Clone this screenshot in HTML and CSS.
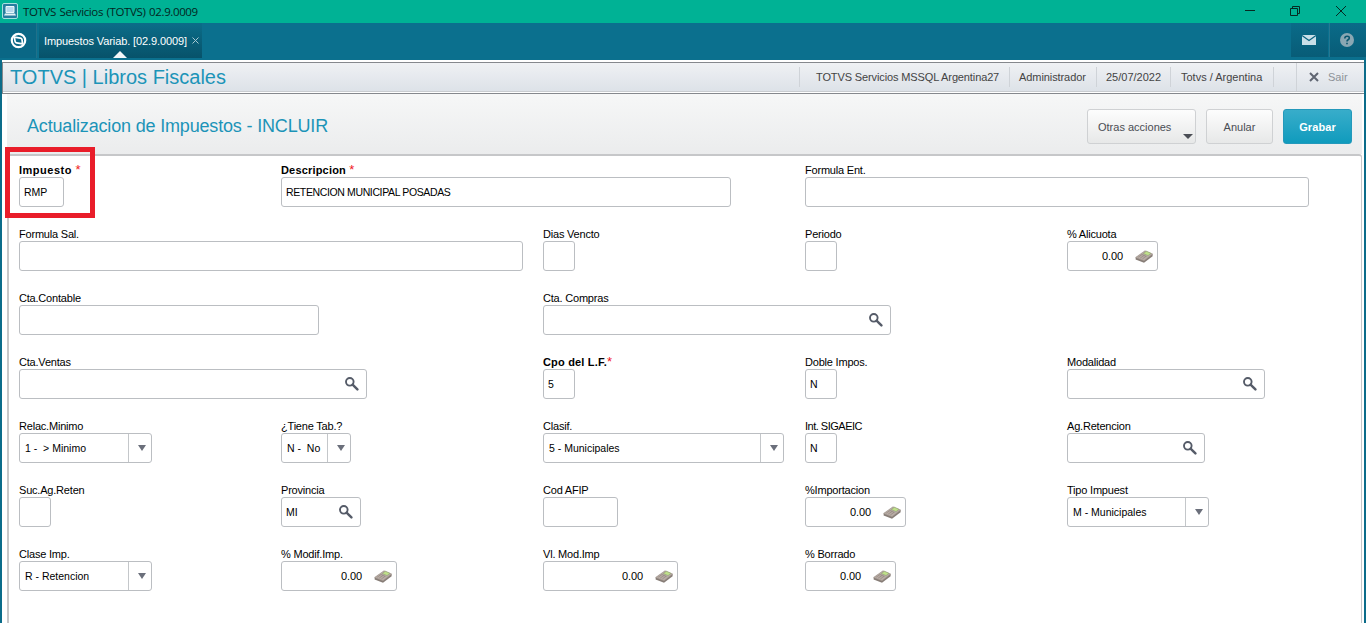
FILE: index.html
```html
<!DOCTYPE html>
<html lang="es">
<head>
<meta charset="utf-8">
<title>TOTVS Servicios</title>
<link rel="stylesheet" href="styles.css">
</head>
<body>
<svg class="defs" width="0" height="0">
  <symbol id="search" viewBox="0 0 14 14"><circle cx="4.800" cy="4.800" r="3.800" fill="none" stroke="#555b68" stroke-width="1.900"/><path d="M7.600 7.600l4.800 4.800" stroke="#555b68" stroke-width="2.400" stroke-linecap="round"/></symbol>
  <symbol id="calc" viewBox="0 0 18 15"><path d="M.6 8.600L10 2l7.600 3v2.200L9 13.800.6 10.600z" fill="#877d77"/><path d="M.6 8.400L10 1.700l7.600 3.300L9 11.700z" fill="#b8aca5" stroke="#a0968f" stroke-width=".5"/><path d="M8.400 4.500l3-2.200 4.600 2-3 2.300z" fill="#bfe08a" stroke="#8c9a70" stroke-width=".5"/><path d="M3.200 8.200l3.800-2.700 4.500 2M5.200 9.100l3.900-2.700M7.300 10l3.700-2.700" fill="none" stroke="#92857e" stroke-width=".7"/></symbol>
  <symbol id="down" viewBox="0 0 8 6"><path d="M0 0h8L4 6z" fill="#6b6f7b"/></symbol>
</svg>
<div class="window">
  <header class="titlebar">
    <svg class="app-icon" width="16" height="16" viewBox="0 0 16 16"><rect x=".5" y=".5" width="15" height="15" rx="1.5" fill="#267d9f" stroke="#a7dfe0"/><path d="M4 3.500h8v6H4z" fill="#b9d9ed" stroke="#e9f8fb"/><path d="M3 10.500h10l1 2H2z" fill="#e3f1f6"/></svg>
    <span class="window-title">TOTVS Servicios (TOTVS) 02.9.0009</span>
    <svg class="controls" width="104" height="12" viewBox="0 0 104 12"><g fill="none" stroke="#062a22" stroke-width="1"><path d="M0 5.500h10"/><path d="M45.500 3.500h7v7h-7zM47.500 3.500v-2h7v7h-2"/><path d="M91 1l10 10M101 1L91 11"/></g></svg>
  </header>
  <nav class="tabs">
    <div class="home"><svg width="17" height="17" viewBox="0 0 17 17"><circle cx="8.500" cy="8.500" r="6.700" fill="none" stroke="#fff" stroke-width="2.200"/><path d="M4.300 5.200l6.200.9q1.300.2 1.500 1.500l.6 4.200-6-.9q-1.300-.2-1.500-1.500z" fill="none" stroke="#fff" stroke-width="1.700" stroke-linejoin="round"/></svg></div>
    <div class="tab"><span class="tab-text">Impuestos Variab. [02.9.0009]</span><svg class="tab-close" width="7" height="7" viewBox="0 0 7 7"><path d="M.5.500l6 6M6.500.500l-6 6" stroke="#a8c9d3"/></svg><i class="pointer"></i></div>
    <div class="tool mail"><svg width="14" height="10" viewBox="0 0 14 10"><path d="M0 0h14v10H0z" fill="#c9dfe8"/><path d="M0 .5l7 5 7-5" fill="none" stroke="#0b6480" stroke-width="1.200"/></svg></div>
    <div class="tool help"><svg width="14" height="14" viewBox="0 0 14 14"><circle cx="7" cy="7" r="7" fill="#8aa7b3"/><path d="M4.800 5.400q0-2.200 2.300-2.200t2.200 1.900q0 1.100-1.200 1.700Q7 7.400 7 8.600M7 9.800v1.500" fill="none" stroke="#09556e" stroke-width="1.600"/></svg></div>
  </nav>
  <main class="workspace">
    <div class="module">
      <h1>TOTVS | Libros Fiscales</h1>
      <div class="info env">TOTVS Servicios MSSQL Argentina27</div>
      <div class="info user">Administrador</div>
      <div class="info date">25/07/2022</div>
      <div class="info company">Totvs / Argentina</div>
      <div class="info spacer"></div>
      <div class="info exit"><svg width="10" height="10" viewBox="0 0 10 10"><path d="M1 1l8 8M9 1L1 9" stroke="#5f6571" stroke-width="2"/></svg><span>Sair</span></div>
    </div>
    <section class="page">
      <div class="page-head">
        <h2>Actualizacion de Impuestos - INCLUIR</h2>
        <button class="btn other">Otras acciones<i class="caret"></i></button>
        <button class="btn cancel">Anular</button>
        <button class="btn save">Grabar</button>
      </div>
      <form class="form">
        <div class="field c1 marked"><label class="required wide">Impuesto <b>*</b></label><div class="box w45">RMP</div></div>
        <div class="field c2"><label class="required">Descripcion <b>*</b></label><div class="box w450"><span class="caps">RETENCION MUNICIPAL POSADAS</span></div></div>
        <div class="field c4"><label>Formula Ent.</label><div class="box w504"></div></div>

        <div class="field c1"><label>Formula Sal.</label><div class="box w504"></div></div>
        <div class="field c3"><label>Dias Vencto</label><div class="box w32"></div></div>
        <div class="field c4"><label>Periodo</label><div class="box w32"></div></div>
        <div class="field c5"><label>% Alicuota</label><div class="box number w91">0.00<svg class="calc"><use href="#calc"/></svg></div></div>

        <div class="field c1"><label>Cta.Contable</label><div class="box w300"></div></div>
        <div class="field c3"><label>Cta. Compras</label><div class="box lookup w348"><svg class="search"><use href="#search"/></svg></div></div>

        <div class="field c1"><label>Cta.Ventas</label><div class="box lookup w348"><svg class="search"><use href="#search"/></svg></div></div>
        <div class="field c3"><label class="required">Cpo del L.F.<b>*</b></label><div class="box w32">5</div></div>
        <div class="field c4"><label>Doble Impos.</label><div class="box w32">N</div></div>
        <div class="field c5"><label>Modalidad</label><div class="box lookup w198"><svg class="search"><use href="#search"/></svg></div></div>

        <div class="field c1"><label>Relac.Minimo</label><div class="box select w133">1 -&nbsp; &gt; Minimo<span class="drop"><svg class="down"><use href="#down"/></svg></span></div></div>
        <div class="field c2"><label>¿Tiene Tab.?</label><div class="box select w70">N -&nbsp; No<span class="drop"><svg class="down"><use href="#down"/></svg></span></div></div>
        <div class="field c3"><label>Clasif.</label><div class="box select w241">5 - Municipales<span class="drop"><svg class="down"><use href="#down"/></svg></span></div></div>
        <div class="field c4"><label class="tight">Int. SIGAEIC</label><div class="box w32">N</div></div>
        <div class="field c5"><label>Ag.Retencion</label><div class="box lookup w138"><svg class="search"><use href="#search"/></svg></div></div>

        <div class="field c1"><label>Suc.Ag.Reten</label><div class="box w32"></div></div>
        <div class="field c2"><label>Provincia</label><div class="box lookup w80">MI<svg class="search"><use href="#search"/></svg></div></div>
        <div class="field c3"><label>Cod AFIP</label><div class="box w75"></div></div>
        <div class="field c4"><label>%Importacion</label><div class="box number w101">0.00<svg class="calc"><use href="#calc"/></svg></div></div>
        <div class="field c5"><label>Tipo Impuest</label><div class="box select w142">M - Municipales<span class="drop"><svg class="down"><use href="#down"/></svg></span></div></div>

        <div class="field c1"><label>Clase Imp.</label><div class="box select w133">R - Retencion<span class="drop"><svg class="down"><use href="#down"/></svg></span></div></div>
        <div class="field c2"><label>% Modif.Imp.</label><div class="box number w116">0.00<svg class="calc"><use href="#calc"/></svg></div></div>
        <div class="field c3"><label>Vl. Mod.Imp</label><div class="box number w135">0.00<svg class="calc"><use href="#calc"/></svg></div></div>
        <div class="field c4"><label>% Borrado</label><div class="box number w91">0.00<svg class="calc"><use href="#calc"/></svg></div></div>
      </form>
    </section>
  </main>
</div>
</body>
</html>
```
FILE: styles.css
```css
*, *::before { box-sizing: border-box; }
body { margin: 0; overflow: hidden; font: 11px/14px "Liberation Sans", Arial, sans-serif; color: #000; }
.defs { position: absolute; }
.window { height: 623px; display: flex; flex-direction: column; background: #0b6c8a; }
svg { flex: none; }

.titlebar { height: 23px; flex: none; display: flex; align-items: center; padding: 0 17px 1px 2px; background: #00b295; }
.window-title { margin-left: 5px; padding-top: 1px; font: 11.5px/16px "Open Sans", "Noto Sans", sans-serif; letter-spacing: -.38px; word-spacing: 1px; color: #04251e; white-space: nowrap; }
.controls { margin-left: auto; }

.tabs { height: 37px; flex: none; display: flex; padding: 0 0 2px; background: #0b708e; }
.home { width: 37px; margin-right: 2px; display: flex; align-items: center; justify-content: center; background: #0a6785; border-right: 1px solid #21718a; }
.tab { position: relative; width: 163px; display: flex; align-items: center; padding-left: 5px; background: linear-gradient(#0b6d89, #07526a); color: #fff; white-space: nowrap; }
.tab-text { font-size: 11px; letter-spacing: -.1px; }
.tab-close { margin: -1px 0 0 5px; }
.pointer { position: absolute; left: 74px; bottom: 0; border: 7px solid transparent; border-top: 0; border-bottom-color: #f4f7f9; }
.tool { width: 37px; height: 34px; display: flex; align-items: center; justify-content: center; background: linear-gradient(#0a6b88, #085c77); }
.mail { margin-left: auto; margin-right: 1px; padding-right: 2px; }
.help { border-left: 1px solid #267791; padding-right: 3px; }

.workspace { flex: 1; margin: 0 2px; padding-top: 2px; background: #fff; }
.module { height: 32px; display: flex; align-items: center; padding: 1px 0 3px; border: 1px solid #85888d; border-right: 0; background: linear-gradient(#eff1f4, #dde2e8) 0 0/100% 28px no-repeat, linear-gradient(#c9ccd0, #c9ccd0) 0 28px/100% 1px no-repeat, #fff; }
.module h1 { margin: 0 auto 0 7px; font-weight: normal; font-size: 20px; line-height: 24px; color: #1c94b8; white-space: nowrap; }
.info { height: 20px; border-left: 1px solid #cfd3d8; display: flex; align-items: center; white-space: nowrap; color: #444; }
.env { width: 210px; padding-left: 16px; letter-spacing: -.12px; }
.user { width: 87px; padding-left: 9px; letter-spacing: -.08px; }
.date { width: 74px; padding-left: 9px; }
.company { width: 103px; padding-left: 10px; }
.spacer { width: 23px; }
.exit { width: 68px; height: 28px; padding-left: 12px; gap: 9px; color: #8d9298; }

.page { margin: 0 2px 0 5px; }
.page-head { height: 60px; display: flex; align-items: center; padding: 4px 10px 0 20px; background: linear-gradient(#f6f7f7, #ebeced); }
.page-head h2 { margin: 0 auto 0 0; font-weight: normal; font-size: 18px; line-height: 22px; letter-spacing: -.17px; color: #1c94b8; white-space: nowrap; }
.btn { position: relative; height: 35px; padding: 1px 0 0; border: 1px solid #cfd1d3; border-radius: 3px; background: linear-gradient(#fdfdfd, #e7e8e8); color: #4a4d54; font: 11px/14px "Liberation Sans", Arial, sans-serif; }
.other { width: 109px; margin-right: 10px; text-align: left; padding-left: 10px; }
.caret { position: absolute; right: 2px; bottom: 4px; border: 5px solid transparent; border-bottom: 0; border-top-color: #4b4e55; }
.cancel { width: 67px; margin-right: 10px; }
.save { width: 69px; border-color: #2499bb; background: linear-gradient(#38adca, #109bbd); color: #fff; font-weight: bold; letter-spacing: .1px; }

.form { height: 469px; display: grid; grid-template-columns: repeat(5, 262px); grid-auto-rows: 64px; padding: 7px 0 0 10px; border: 2px solid #c6c7c9; border-width: 2px 1px 0 2px; border-top-right-radius: 3px; background: #fff; }
.field { position: relative; min-width: 0; }
.c1 { grid-column: 1; } .c2 { grid-column: 2; } .c3 { grid-column: 3; } .c4 { grid-column: 4; } .c5 { grid-column: 5; }
label { display: block; height: 14px; white-space: nowrap; letter-spacing: -.2px; }
.tight { letter-spacing: -.5px; }
.required { font-weight: bold; letter-spacing: .18px; }
.wide { letter-spacing: .5px; }
.required b { color: #f01822; font-weight: normal; font-size: 13px; line-height: 10px; }
.box { height: 30px; display: flex; align-items: center; padding: 0 4px; border: 1px solid #bbbec2; border-radius: 3px; white-space: nowrap; font-size: 10.5px; }
.caps { letter-spacing: -.37px; }
.marked::before { content: ""; position: absolute; left: -14px; top: -16px; width: 90px; height: 71px; border: 5px solid #e91d2a; }
.lookup { padding-right: 7px; }
.search { width: 14px; height: 14px; margin-left: auto; margin-top: -1px; }
.number { justify-content: flex-end; padding-right: 4px; font-size: 11px; letter-spacing: -.1px; }
.calc { width: 18px; height: 15px; margin-left: 12px; }
.select { padding: 0 0 0 5px; }
.drop { width: 23px; height: 28px; margin-left: auto; border-left: 1px solid #c4c7ca; display: flex; align-items: center; justify-content: center; padding-left: 3px; }
.down { width: 8px; height: 6px; }
.w32 { width: 32px; } .w45 { width: 45px; } .w70 { width: 70px; } .w75 { width: 75px; } .w80 { width: 80px; }
.w91 { width: 91px; } .w101 { width: 101px; } .w116 { width: 116px; } .w133 { width: 133px; } .w135 { width: 135px; }
.w138 { width: 138px; } .w142 { width: 142px; } .w198 { width: 198px; } .w241 { width: 241px; } .w300 { width: 300px; }
.w348 { width: 348px; } .w450 { width: 450px; } .w504 { width: 504px; }
```
